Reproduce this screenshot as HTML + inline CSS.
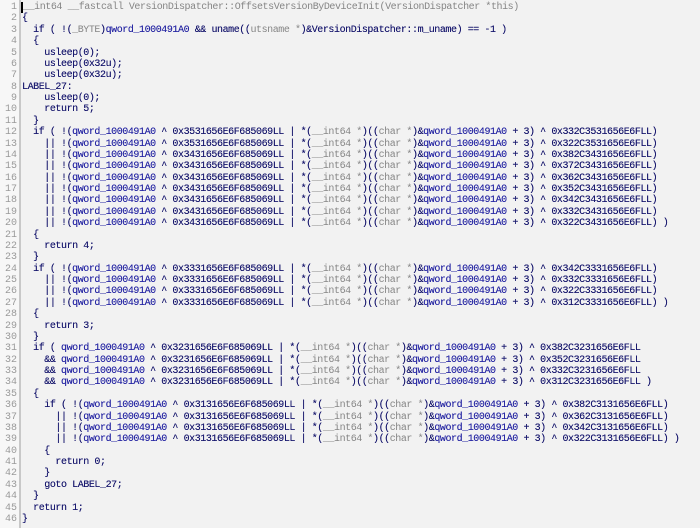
<!DOCTYPE html>
<html><head><meta charset="utf-8"><style>
html,body{margin:0;padding:0;width:700px;height:528px;overflow:hidden;background:#f2f2f2}
#g{position:absolute;left:0;top:0;width:19px;height:528px;background:#f7f7f7;border-right:2px solid #c8c8c8}
pre{margin:0;font-family:"Liberation Mono",monospace;font-size:10px;letter-spacing:-0.43px;line-height:11.38px;position:absolute;top:2px}
#n{left:0;width:17px;text-align:right;color:#9a9a9a;letter-spacing:0}
#c{left:22px;color:#18186e;text-shadow:0 0 0.3px #18186e}
.t{color:#858585;text-shadow:none}.q{color:#2828a4;text-shadow:0 0 0.3px #2828a4}
.cur{border-left:2px solid #000;margin-left:-1px}
</style></head><body><div id="g"></div>
<pre id="n">1
2
3
4
5
6
7
8
9
10
11
12
13
14
15
16
17
18
19
20
21
22
23
24
25
26
27
28
29
30
31
32
33
34
35
36
37
38
39
40
41
42
43
44
45
46</pre>
<pre id="c"><span class="t"><span class="cur"></span>__int64 __fastcall VersionDispatcher::OffsetsVersionByDeviceInit(VersionDispatcher *this)</span>
{
  if ( !(<span class="t">_BYTE</span>)<span class="q">qword_1000491A0</span> &amp;&amp; uname((<span class="t">utsname *</span>)&amp;VersionDispatcher::m_uname) == -1 )
  {
    usleep(0);
    usleep(0x32u);
    usleep(0x32u);
LABEL_27:
    usleep(0);
    return 5;
  }
  if ( !(<span class="q">qword_1000491A0</span> ^ 0x3531656E6F685069LL | *(<span class="t">__int64 *</span>)((<span class="t">char *</span>)&amp;<span class="q">qword_1000491A0</span> + 3) ^ 0x332C3531656E6FLL)
    || !(<span class="q">qword_1000491A0</span> ^ 0x3531656E6F685069LL | *(<span class="t">__int64 *</span>)((<span class="t">char *</span>)&amp;<span class="q">qword_1000491A0</span> + 3) ^ 0x322C3531656E6FLL)
    || !(<span class="q">qword_1000491A0</span> ^ 0x3431656E6F685069LL | *(<span class="t">__int64 *</span>)((<span class="t">char *</span>)&amp;<span class="q">qword_1000491A0</span> + 3) ^ 0x382C3431656E6FLL)
    || !(<span class="q">qword_1000491A0</span> ^ 0x3431656E6F685069LL | *(<span class="t">__int64 *</span>)((<span class="t">char *</span>)&amp;<span class="q">qword_1000491A0</span> + 3) ^ 0x372C3431656E6FLL)
    || !(<span class="q">qword_1000491A0</span> ^ 0x3431656E6F685069LL | *(<span class="t">__int64 *</span>)((<span class="t">char *</span>)&amp;<span class="q">qword_1000491A0</span> + 3) ^ 0x362C3431656E6FLL)
    || !(<span class="q">qword_1000491A0</span> ^ 0x3431656E6F685069LL | *(<span class="t">__int64 *</span>)((<span class="t">char *</span>)&amp;<span class="q">qword_1000491A0</span> + 3) ^ 0x352C3431656E6FLL)
    || !(<span class="q">qword_1000491A0</span> ^ 0x3431656E6F685069LL | *(<span class="t">__int64 *</span>)((<span class="t">char *</span>)&amp;<span class="q">qword_1000491A0</span> + 3) ^ 0x342C3431656E6FLL)
    || !(<span class="q">qword_1000491A0</span> ^ 0x3431656E6F685069LL | *(<span class="t">__int64 *</span>)((<span class="t">char *</span>)&amp;<span class="q">qword_1000491A0</span> + 3) ^ 0x332C3431656E6FLL)
    || !(<span class="q">qword_1000491A0</span> ^ 0x3431656E6F685069LL | *(<span class="t">__int64 *</span>)((<span class="t">char *</span>)&amp;<span class="q">qword_1000491A0</span> + 3) ^ 0x322C3431656E6FLL) )
  {
    return 4;
  }
  if ( !(<span class="q">qword_1000491A0</span> ^ 0x3331656E6F685069LL | *(<span class="t">__int64 *</span>)((<span class="t">char *</span>)&amp;<span class="q">qword_1000491A0</span> + 3) ^ 0x342C3331656E6FLL)
    || !(<span class="q">qword_1000491A0</span> ^ 0x3331656E6F685069LL | *(<span class="t">__int64 *</span>)((<span class="t">char *</span>)&amp;<span class="q">qword_1000491A0</span> + 3) ^ 0x332C3331656E6FLL)
    || !(<span class="q">qword_1000491A0</span> ^ 0x3331656E6F685069LL | *(<span class="t">__int64 *</span>)((<span class="t">char *</span>)&amp;<span class="q">qword_1000491A0</span> + 3) ^ 0x322C3331656E6FLL)
    || !(<span class="q">qword_1000491A0</span> ^ 0x3331656E6F685069LL | *(<span class="t">__int64 *</span>)((<span class="t">char *</span>)&amp;<span class="q">qword_1000491A0</span> + 3) ^ 0x312C3331656E6FLL) )
  {
    return 3;
  }
  if ( <span class="q">qword_1000491A0</span> ^ 0x3231656E6F685069LL | *(<span class="t">__int64 *</span>)((<span class="t">char *</span>)&amp;<span class="q">qword_1000491A0</span> + 3) ^ 0x382C3231656E6FLL
    &amp;&amp; <span class="q">qword_1000491A0</span> ^ 0x3231656E6F685069LL | *(<span class="t">__int64 *</span>)((<span class="t">char *</span>)&amp;<span class="q">qword_1000491A0</span> + 3) ^ 0x352C3231656E6FLL
    &amp;&amp; <span class="q">qword_1000491A0</span> ^ 0x3231656E6F685069LL | *(<span class="t">__int64 *</span>)((<span class="t">char *</span>)&amp;<span class="q">qword_1000491A0</span> + 3) ^ 0x332C3231656E6FLL
    &amp;&amp; <span class="q">qword_1000491A0</span> ^ 0x3231656E6F685069LL | *(<span class="t">__int64 *</span>)((<span class="t">char *</span>)&amp;<span class="q">qword_1000491A0</span> + 3) ^ 0x312C3231656E6FLL )
  {
    if ( !(<span class="q">qword_1000491A0</span> ^ 0x3131656E6F685069LL | *(<span class="t">__int64 *</span>)((<span class="t">char *</span>)&amp;<span class="q">qword_1000491A0</span> + 3) ^ 0x382C3131656E6FLL)
      || !(<span class="q">qword_1000491A0</span> ^ 0x3131656E6F685069LL | *(<span class="t">__int64 *</span>)((<span class="t">char *</span>)&amp;<span class="q">qword_1000491A0</span> + 3) ^ 0x362C3131656E6FLL)
      || !(<span class="q">qword_1000491A0</span> ^ 0x3131656E6F685069LL | *(<span class="t">__int64 *</span>)((<span class="t">char *</span>)&amp;<span class="q">qword_1000491A0</span> + 3) ^ 0x342C3131656E6FLL)
      || !(<span class="q">qword_1000491A0</span> ^ 0x3131656E6F685069LL | *(<span class="t">__int64 *</span>)((<span class="t">char *</span>)&amp;<span class="q">qword_1000491A0</span> + 3) ^ 0x322C3131656E6FLL) )
    {
      return 0;
    }
    goto LABEL_27;
  }
  return 1;
}</pre>
</body></html>
